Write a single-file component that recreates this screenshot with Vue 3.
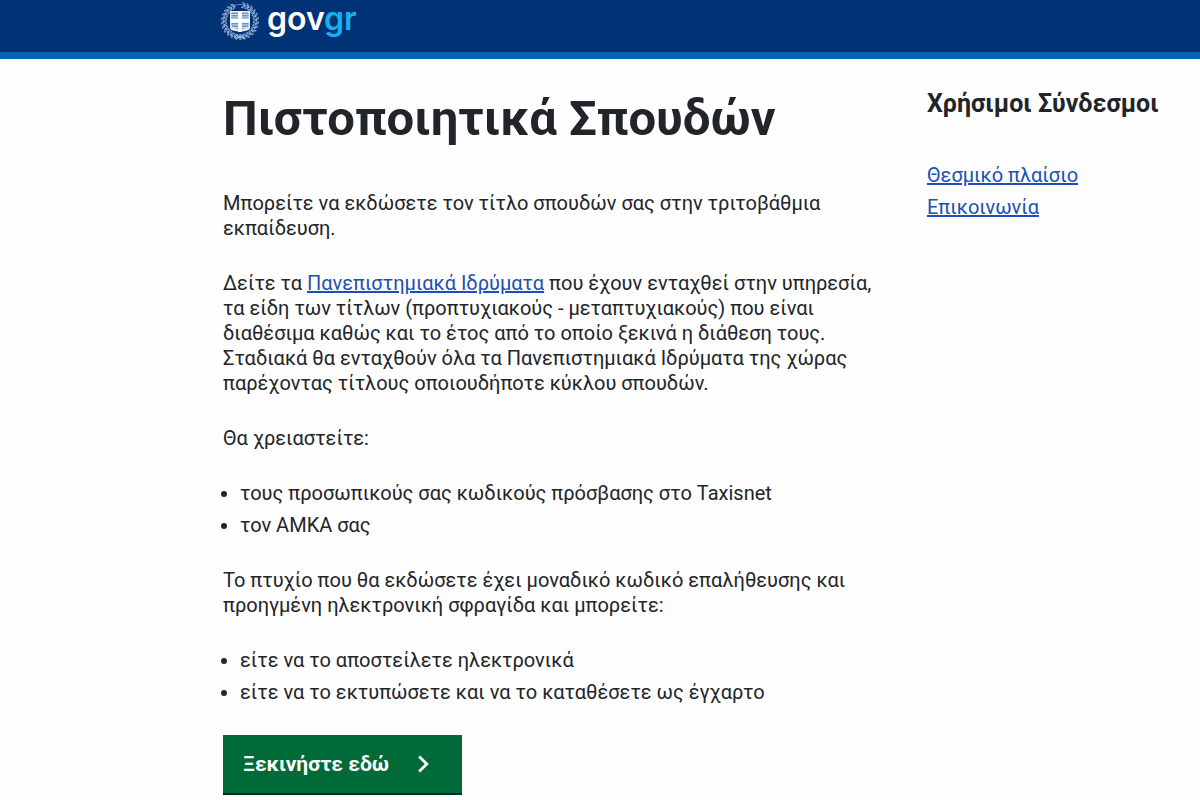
<script setup>
const links = ['Θεσμικό πλαίσιο', 'Επικοινωνία']

const needs = ['τους προσωπικούς σας κωδικούς πρόσβασης στο Taxisnet', 'τον ΑΜΚΑ σας']

const options = ['είτε να το αποστείλετε ηλεκτρονικά', 'είτε να το εκτυπώσετε και να το καταθέσετε ως έγχαρτο']

// leaves of the wreath around the emblem, as angles from the top
const leaves = Array.from({ length: 24 }, (_, i) => i * 14 + 19)
</script>


<template>
  <div class="page">
    <header class="header">
      <a class="brand" href="#">
        <svg class="emblem" viewBox="0 0 40 40" aria-hidden="true">
          <g fill="none" stroke="#a9bfe0">
            <circle cx="20" cy="20" r="16.5" stroke-width=".6" />
            <g v-for="angle in leaves" :key="angle" :transform="`rotate(${angle} 20 20)`">
              <path d="M20 4.2q-2.8-.8-3.4-2.8q2.8-.1 3.4 2.8M20 4.2q-2.4.6-3.1 2.6q2.6.1 3.1-2.6" stroke-width=".7" />
            </g>
            <path d="M15 37l5-2 5 2M16 34l8 4M24 34l-8 4" stroke-width=".8" />
          </g>
          <path d="M10 10h20v16q0 3-3 3.5l-7 1.5-7-1.5q-3-.5-3-3.5z" fill="#e6edf7" />
          <path d="M11.5 11.5H18v6h-6.5zM22 11.5h6.5v6H22zM11.5 22H18v6l-4.5-1q-2-.5-2-2zM28.5 22H22v6l4.5-1q2-.5 2-2z" fill="#6f8fc1" />
          <path d="M11.5 13.5H18M11.5 16H18M22 13.5h6.5M22 16h6.5M11.5 24H18M12 26.5h6M22 24h6.5M22 26.5h6" stroke="#cfdcee" />
          <path d="M18.5 10h3v8.3H30v3h-8.5v9.4L20 31l-1.5-.3v-9.4H10v-3h8.5z" fill="#fff" />
        </svg>
        <span class="wordmark">gov<span class="accent">gr</span></span>
      </a>
    </header>

    <div class="container">
      <main class="main">
        <h1>Πιστοποιητικά Σπουδών</h1>
        <p>Μπορείτε να εκδώσετε τον τίτλο σπουδών σας στην τριτοβάθμια εκπαίδευση.</p>
        <p>
          Δείτε τα <a href="#">Πανεπιστημιακά Ιδρύματα</a> που έχουν ενταχθεί στην υπηρεσία,
          τα είδη των τίτλων (προπτυχιακούς - μεταπτυχιακούς) που είναι διαθέσιμα καθώς και το
          έτος από το οποίο ξεκινά η διάθεση τους. Σταδιακά θα ενταχθούν όλα τα Πανεπιστημιακά
          Ιδρύματα της χώρας παρέχοντας τίτλους οποιουδήποτε κύκλου σπουδών.
        </p>
        <p>Θα χρειαστείτε:</p>
        <ul>
          <li v-for="item in needs" :key="item">{{ item }}</li>
        </ul>
        <p>
          Το πτυχίο που θα εκδώσετε έχει μοναδικό κωδικό επαλήθευσης και προηγμένη ηλεκτρονική
          σφραγίδα και μπορείτε:
        </p>
        <ul>
          <li v-for="item in options" :key="item">{{ item }}</li>
        </ul>
        <button class="start" type="button">
          Ξεκινήστε εδώ
          <svg viewBox="0 0 12 18" aria-hidden="true">
            <path d="M2 2l7 7-7 7" fill="none" stroke="currentColor" stroke-width="2.6" />
          </svg>
        </button>
      </main>

      <aside class="side">
        <h2>Χρήσιμοι Σύνδεσμοι</h2>
        <nav>
          <a v-for="link in links" :key="link" href="#">{{ link }}</a>
        </nav>
      </aside>
    </div>
  </div>
</template>


<style>
body {
  margin: 0;
  background: #fefefe;
}
</style>

<style scoped>
.page {
  color: #212529;
  font-family: Roboto, 'Noto Sans', sans-serif;
  font-size: 20px;
  line-height: 25px;
}

.header {
  height: 52px;
  padding-left: 220px;
  background: #003375;
  border-bottom: 7px solid #0065b3;
}

.brand {
  display: inline-flex;
  gap: 7px;
  text-decoration: none;
}

.emblem {
  width: 40px;
  height: 42px;
}

.wordmark {
  color: white;
  font-family: Inter, sans-serif;
  font-size: 32px;
  font-weight: 600;
  line-height: 38px;
}

.accent {
  color: #1ab0f0;
}

.container {
  display: flex;
  gap: 44px;
  padding: 30px 32px 5px 223px;
}

.main {
  flex: 1;
}

h1 {
  margin: 0 0 42px;
  font-size: 49px;
  line-height: 60px;
}

p {
  margin: 0 0 30px;
}

a {
  color: #1d4fb5;
}

ul {
  margin: 0 0 30px;
  padding-left: 17px;
}

li + li {
  margin-top: 7px;
}

.start {
  display: flex;
  align-items: center;
  gap: 28px;
  height: 60px;
  padding: 0 32px 0 20px;
  color: white;
  background: #006a39;
  border: 0;
  border-bottom: 2px solid #00301c;
  font-family: inherit;
  font-size: 21px;
  font-weight: 700;
  cursor: pointer;
}

.start svg {
  width: 13px;
  height: 20px;
}

.side {
  flex: 0 0 241px;
}

h2 {
  margin: 0 0 44px;
  font-size: 25px;
  line-height: 30px;
}

nav {
  display: flex;
  flex-direction: column;
  align-items: flex-start;
  gap: 7px;
}
</style>
